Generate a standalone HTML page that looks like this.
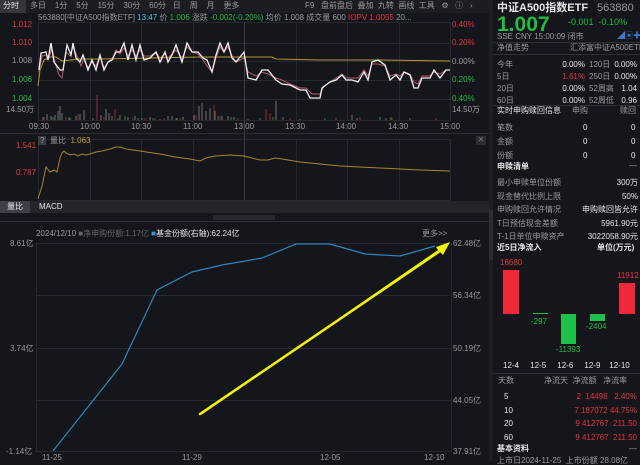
<!DOCTYPE html><html><head><meta charset="utf-8"><style>
*{margin:0;padding:0;box-sizing:border-box}
body{width:640px;height:461px;background:#14161b;color:#c8c8c8;font-family:"Liberation Sans","Noto Sans CJK SC",sans-serif;font-size:8px;position:relative;overflow:hidden}
.a{position:absolute;white-space:nowrap;line-height:1}
.r{color:#e8323c}.g{color:#1fbf3f}.w{color:#e6e6e6}.gy{color:#9a9a9a}
.R{text-align:right}
</style></head><body>
<div class="a" style="left:0;top:0;width:490px;height:13px;background:#1b1d22"></div>
<div class="a" style="left:0;top:0;width:26px;height:13px;background:#34363c"></div>
<div class="a w" style="left:3px;top:2px">分时</div>
<div class="a gy" style="left:30px;top:2px;word-spacing:0">多日&nbsp;&nbsp;&nbsp;&nbsp;1分&nbsp;&nbsp;&nbsp;&nbsp;5分&nbsp;&nbsp;&nbsp;&nbsp;15分&nbsp;&nbsp;&nbsp;&nbsp;30分&nbsp;&nbsp;&nbsp;&nbsp;60分&nbsp;&nbsp;&nbsp;日&nbsp;&nbsp;&nbsp;&nbsp;周&nbsp;&nbsp;&nbsp;&nbsp;月&nbsp;&nbsp;&nbsp;&nbsp;更多</div>
<div class="a gy" style="left:305px;top:2px">F9&nbsp;&nbsp;&nbsp;盘前盘后&nbsp;&nbsp;叠加&nbsp;&nbsp;九转&nbsp;&nbsp;画线&nbsp;&nbsp;工具&nbsp;&nbsp;&nbsp;⚙&nbsp;&nbsp;&nbsp;ⓘ&nbsp;&nbsp;&nbsp;›</div>
<div class="a" style="left:38px;top:14px"><span class="gy">563880[中证A500指数ETF]</span> <span style="color:#3cc8d8">13:47</span> <span class="gy">价</span> <span class="g">1.006</span> <span class="gy">涨跌</span> <span class="g">-0.002(-0.20%)</span> <span class="gy">均价 1.008 成交量 600</span> <span class="r">IOPV 1.0055</span> <span class="gy">20...</span></div>
<div class="a r" style="left:12px;top:21px">1.012</div>
<div class="a r" style="left:12px;top:39px">1.010</div>
<div class="a gy" style="left:12px;top:57px">1.008</div>
<div class="a g" style="left:12px;top:76px">1.006</div>
<div class="a g" style="left:12px;top:95px">1.004</div>
<div class="a gy" style="left:6px;top:106px">14.50万</div>
<div class="a r" style="left:452px;top:21px">0.40%</div>
<div class="a r" style="left:452px;top:39px">0.20%</div>
<div class="a gy" style="left:452px;top:58px">0.00%</div>
<div class="a g" style="left:452px;top:76px">0.20%</div>
<div class="a g" style="left:452px;top:95px">0.40%</div>
<div class="a gy" style="left:452px;top:106px">14.50万</div>
<div class="a gy" style="top:123px;left:29px">09:30</div>
<div class="a gy" style="top:123px;left:80px">10:00</div>
<div class="a gy" style="top:123px;left:131px">10:30</div>
<div class="a gy" style="top:123px;left:183px">11:00</div>
<div class="a gy" style="top:123px;left:234px">13:00</div>
<div class="a gy" style="top:123px;left:285px">13:30</div>
<div class="a gy" style="top:123px;left:336px">14:00</div>
<div class="a gy" style="top:123px;left:388px">14:30</div>
<div class="a gy" style="top:123px;left:440px">15:00</div>
<svg class="a" style="left:0;top:0" width="490" height="461">
<g stroke="#262a30" stroke-width="1" fill="none">
<rect x="38.5" y="22.5" width="412" height="98"/>
<line x1="38" y1="43.5" x2="450" y2="43.5"/><line x1="38" y1="61.5" x2="450" y2="61.5"/><line x1="38" y1="80.5" x2="450" y2="80.5"/><line x1="38" y1="99.5" x2="450" y2="99.5"/>
<line x1="90.5" y1="22" x2="90.5" y2="120"/><line x1="141.5" y1="22" x2="141.5" y2="120"/><line x1="193.5" y1="22" x2="193.5" y2="120"/><line x1="296.5" y1="22" x2="296.5" y2="120"/><line x1="347.5" y1="22" x2="347.5" y2="120"/><line x1="399.5" y1="22" x2="399.5" y2="120"/>
<line x1="244.5" y1="22" x2="244.5" y2="200" stroke="#3a3d44"/>
<rect x="38.5" y="139.5" width="412" height="61"/>
<line x1="90.5" y1="140" x2="90.5" y2="200"/><line x1="141.5" y1="140" x2="141.5" y2="200"/><line x1="193.5" y1="140" x2="193.5" y2="200"/><line x1="296.5" y1="140" x2="296.5" y2="200"/><line x1="347.5" y1="140" x2="347.5" y2="200"/><line x1="399.5" y1="140" x2="399.5" y2="200"/>
<line x1="36" y1="243.5" x2="451" y2="243.5"/><line x1="36" y1="295.5" x2="451" y2="295.5"/><line x1="36" y1="348.5" x2="451" y2="348.5"/><line x1="36" y1="400.5" x2="451" y2="400.5"/><line x1="36" y1="451.5" x2="451" y2="451.5"/>
<line x1="36.5" y1="243" x2="36.5" y2="452"/><line x1="451.5" y1="243" x2="451.5" y2="452"/>
</g>
<line x1="0" y1="133.5" x2="490" y2="133.5" stroke="#2c2f35"/>
<g stroke-width="1.1" opacity="0.85">
<path stroke="#7a7a7a" d="M43 120V117M47 120V114M51 120V116M55 120V115M58 120V111M60 120V106M62 120V113M70 120V118M76 120V116M80 120V114M84 120V110M93 120V118M101 120V115M106 120V109M109 120V113M112 120V116M120 120V115M128 120V117M135 120V116M142 120V118M150 120V117M160 120V119M168 120V116M172 120V116M177 120V118M183 120V117M194 120V115M199 120V106M202 120V103M206 120V111M210 120V108M215 120V111M222 120V116M228 120V116M234 120V117M260 120V118M276 120V101M283 120V117M300 120V119M352 120V115M357 120V118M380 120V117M386 120V118M410 120V118"/>
<path stroke="#a02a30" d="M44 120V117M66 120V117M78 120V114M97 120V95M104 120V117M115 120V109M133 120V118M145 120V118M155 120V118M164 120V118M180 120V118M196 120V115M214 120V105M220 120V116M238 120V118M266 120V109M270 120V113M290 120V118M336 120V118M360 120V117M392 120V118M436 120V118"/>
<path stroke="#1f9a3a" d="M53 120V117M69 120V117M118 120V118M125 120V116M138 120V118M153 120V118M176 120V118M218 120V116M231 120V117M248 120V119M273 120V117M325 120V118M380 120V118M391 120V117"/>
</g>
<polyline fill="none" stroke="#b8952a" stroke-width="1" points="38,86 40,70 44,60 50,57 56,57 62,61 70,60 80,59 100,59 150,58 200,57 240,57 272,57 276,59 320,60 380,60 450,61"/>
<polyline fill="none" stroke="#b85a66" stroke-width="1" points="39,72 42,56 46,55 49,58 52,48 55,63 59,75 62,78 66,52 70,56 73,47 77,56 81,66 84,58 88,68 92,62 96,66 100,56 104,68 108,62 112,59 116,50 120,54 124,48 128,56 132,50 136,56 140,50 144,56 150,56 156,52 160,58 165,54 168,58 172,54 176,50 182,58 187,47 192,52 198,54 203,60 207,66 212,72 216,58 220,47 224,52 228,47 232,56 236,62 244,58 248,72 256,76 262,72 268,74 276,78 282,80 290,84 300,88 306,88 312,94 320,94 324,86 330,82 336,78 342,74 346,78 352,78 358,78 364,70 368,76 372,64 378,64 385,66 390,76 396,74 400,76 404,72 410,74 414,82 418,84 422,76 430,76 434,72 440,74 446,70 450,70"/>
<polyline fill="none" stroke="#f2f2f2" stroke-width="1.3" points="39,70 41,53 46,52 48,60 51,43 54,62 60,70 63,70 67,45 71,55 73,43 76,58 80,62 83,55 88,70 92,60 96,70 100,55 104,70 108,62 112,60 116,52 120,52 124,43 128,60 132,45 136,60 140,45 144,60 150,58 156,52 160,62 165,52 168,62 172,55 176,45 182,62 187,43 192,52 198,52 203,58 207,60 212,72 216,55 220,43 224,52 228,43 232,58 236,62 244,52 248,78 256,80 262,70 268,70 276,80 282,84 290,85 300,90 306,90 310,98 320,98 322,88 330,82 336,80 342,75 346,80 352,80 358,82 364,72 368,80 372,62 378,60 385,65 390,80 396,75 400,80 404,72 410,75 414,88 418,88 422,78 430,78 434,70 440,78 446,70 450,70"/>
<polyline fill="none" stroke="#a8862a" stroke-width="1" points="38,199 42,186 46,167 50,172 54,170 57,172 60,158 62,153 64,151 66,153 70,155 74,154 78,156 82,154 86,155 90,154 96,152 102,151 110,149 116,147 120,147 126,149 140,151 160,154 175,157 190,159 200,161 206,158 215,156 230,155 244,156 260,160 268,160 275,158 282,159 300,162 320,164 340,166 360,167 380,168 400,169 420,170 450,171"/>
<polyline fill="none" stroke="#2a87bd" stroke-width="1.2" points="53,451 122,364 157,290 192,272 222,265 262,258 296,244 330,244 365,254 400,256 435,246"/>
<polygon fill="#f2f20a" points="200,414 438,250 436,247 450,242 443,255 440,252 201,415"/>
<line x1="200" y1="414" x2="440" y2="251" stroke="#f2f20a" stroke-width="2.5" stroke-linecap="round"/>
</svg>
<div class="a" style="left:38px;top:136px;width:8px;height:9px;background:#3a3d44"></div>
<div class="a gy" style="left:40px;top:137px">?</div>
<div class="a gy" style="left:50px;top:137px">量比 <span style="color:#d0a020">&nbsp;1.063</span></div>
<div class="a r" style="left:16px;top:142px">1.541</div>
<div class="a r" style="left:16px;top:169px">0.787</div>
<div class="a" style="left:476px;top:136px;width:10px;height:9px;background:#2a2c31;color:#777;font-size:8px;text-align:center">✕</div>
<div class="a" style="left:0;top:201px;width:490px;height:12px;background:#232529"></div>
<div class="a" style="left:0;top:201px;width:30px;height:12px;background:#3e4048"></div>
<div class="a w" style="left:7px;top:203px">量比</div>
<div class="a w" style="left:39px;top:203px">MACD</div>
<div class="a" style="left:213px;top:215px;width:62px;height:5px;background:#25272c"></div>
<div class="a" style="left:0;top:221px;width:490px;height:1px;background:#2c2f35"></div>
<div class="a gy" style="left:36px;top:230px">2024/12/10 <span style="color:#666">■净申购份额:1.17亿</span> <span style="color:#2a9ad8">■</span><span class="w">基金份额(右轴):62.24亿</span></div>
<div class="a gy" style="left:422px;top:230px">更多&gt;&gt;</div>
<div class="a gy" style="left:10px;top:240px">8.61亿</div>
<div class="a gy" style="left:10px;top:345px">3.74亿</div>
<div class="a gy" style="left:6px;top:448px">-1.14亿</div>
<div class="a gy" style="left:453px;top:240px">62.48亿</div>
<div class="a gy" style="left:453px;top:292px">56.34亿</div>
<div class="a gy" style="left:453px;top:345px">50.19亿</div>
<div class="a gy" style="left:453px;top:397px">44.05亿</div>
<div class="a gy" style="left:453px;top:448px">37.91亿</div>
<div class="a gy" style="left:42px;top:454px">11-25</div>
<div class="a gy" style="left:182px;top:454px">11-29</div>
<div class="a gy" style="left:320px;top:454px">12-05</div>
<div class="a gy" style="left:424px;top:454px">12-10</div>
<div class="a" style="left:489px;top:0;width:4px;height:461px;background:#1d1f24"></div>
<div class="a" style="left:489px;top:210px;width:4px;height:50px;background:#2c2e33"></div>
<div class="a w" style="left:497px;top:3px;font-size:11px;font-weight:bold">中证A500指数ETF</div>
<div class="a gy" style="left:597px;top:3px;font-size:11px">563880</div>
<div class="a g" style="left:497px;top:14px;font-size:21px;font-weight:bold">1.007</div>
<div class="a g" style="left:568px;top:18px;font-size:9px">-0.001&nbsp;&nbsp;-0.10%</div>
<div class="a gy" style="left:497px;top:33px">SSE CNY 15:00:09 闭市</div>
<div class="a" style="left:617px;top:32px;width:20px;height:8px;color:#3a78c8">◢▣✚</div>
<div class="a" style="left:493px;top:42px;width:147px;height:1px;background:#2c2f35"></div>
<div class="a gy" style="left:497px;top:44px">净值走势</div>
<div class="a gy" style="left:570px;top:44px">汇添富中证A500ETF</div>
<div class="a" style="left:493px;top:54px;width:147px;height:1px;background:#2c2f35"></div>
<div class="a gy" style="left:497px;top:59px;line-height:12px">今年<br>5日<br>20日<br>60日</div>
<div class="a R w" style="left:545px;top:59px;width:40px;line-height:12px">0.00%<br><span class="r">1.61%</span><br>0.00%<br>0.00%</div>
<div class="a gy" style="left:589px;top:59px;line-height:12px">120日<br>250日<br>52周高<br>52周低</div>
<div class="a R w" style="left:600px;top:59px;width:37px;line-height:12px">0.00%<br>0.00%<br>1.04<br>0.96</div>
<div class="a" style="left:493px;top:105px;width:147px;height:1px;background:#2c2f35"></div>
<div class="a w" style="left:497px;top:107px">实时申购赎回信息</div>
<div class="a gy" style="left:572px;top:107px">申购</div>
<div class="a gy" style="left:620px;top:107px">赎回</div>
<div class="a gy" style="left:497px;top:121px;line-height:14px">笔数<br>金额<br>份额</div>
<div class="a w" style="left:583px;top:121px;line-height:14px">0<br>0<br>0</div>
<div class="a w" style="left:631px;top:121px;line-height:14px">0<br>0<br>0</div>
<div class="a w" style="left:497px;top:163px;font-weight:bold">申赎清单</div>
<div class="a gy" style="left:629px;top:162px">—</div>
<div class="a gy" style="left:497px;top:176px;line-height:13.5px">最小申赎单位份额<br>现金替代比例上限<br>申购赎回允许情况<br>T日预估现金差额<br>T-1日单位申赎资产</div>
<div class="a R w" style="left:560px;top:176px;width:78px;line-height:13.5px">300万<br>50%<br>申购赎回皆允许<br>5961.90元<br>3022058.90元</div>
<div class="a w" style="left:497px;top:244px;font-weight:bold">近5日净流入</div>
<div class="a w" style="left:597px;top:244px;font-weight:bold">单位(万元)</div>
<div class="a r" style="left:500px;top:259px">16680</div>
<div class="a" style="left:503px;top:270px;width:16px;height:44px;background:#f0283a"></div>
<div class="a" style="left:533px;top:313px;width:15px;height:1px;background:#1fbf3f"></div>
<div class="a g" style="left:531px;top:318px">-297</div>
<div class="a" style="left:561px;top:314px;width:15px;height:30px;background:#1fc04a"></div>
<div class="a g" style="left:556px;top:346px">-11393</div>
<div class="a" style="left:590px;top:314px;width:15px;height:7px;background:#1fc04a"></div>
<div class="a g" style="left:586px;top:323px">-2404</div>
<div class="a r" style="left:617px;top:272px">11912</div>
<div class="a" style="left:619px;top:283px;width:16px;height:31px;background:#f0283a"></div>
<div class="a w" style="left:503px;top:362px;word-spacing:0">12-4&nbsp;&nbsp;&nbsp;&nbsp;&nbsp;12-5&nbsp;&nbsp;&nbsp;&nbsp;&nbsp;12-6&nbsp;&nbsp;&nbsp;&nbsp;&nbsp;12-9&nbsp;&nbsp;&nbsp;&nbsp;12-10</div>
<div class="a" style="left:493px;top:373px;width:147px;height:1px;background:#2c2f35"></div>
<div class="a gy" style="left:498px;top:377px">天数</div>
<div class="a gy" style="left:544px;top:377px">净流天&nbsp;&nbsp;净流额&nbsp;&nbsp;&nbsp;净流率</div>
<div class="a w" style="left:504px;top:390px;line-height:13.7px">5<br>10<br>20<br>60</div>
<div class="a R r" style="left:540px;top:390px;width:97px;line-height:13.7px">2&nbsp;&nbsp;14498&nbsp;&nbsp;&nbsp;2.40%<br>7 187072 44.75%<br>9 412767&nbsp;&nbsp;211.50<br>9 412767&nbsp;&nbsp;211.50</div>
<div class="a w" style="left:497px;top:445px;font-weight:bold">基本资料</div>
<div class="a gy" style="left:629px;top:445px">—</div>
<div class="a gy" style="left:497px;top:457px">上市日2024-11-25&nbsp;&nbsp;上市份额 28.08亿</div>
</body></html>
